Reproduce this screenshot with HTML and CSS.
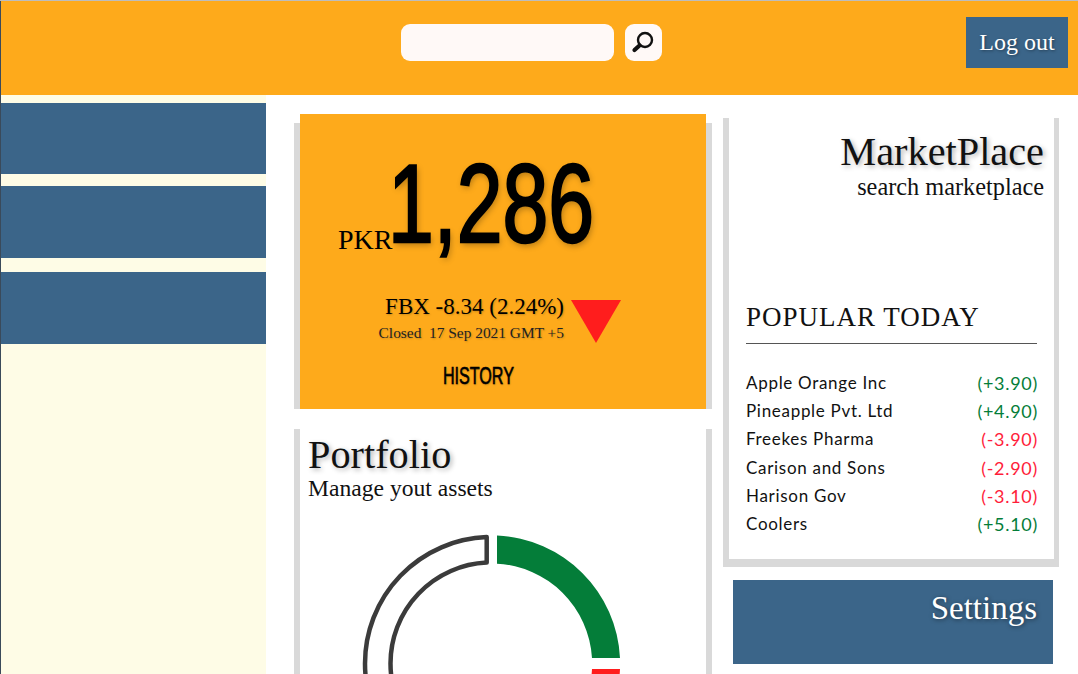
FILE: index.html
```html
<!DOCTYPE html>
<html lang="en">
<head>
<meta charset="UTF-8">
<meta name="viewport" content="width=device-width, initial-scale=1.0">
<title>Dashboard</title>
<link rel="stylesheet" href="styles.css">
</head>
<body>

<div class="page">

<header class="topbar">
  <div class="search">
    <input type="text" class="search-input">
    <button class="search-btn" type="button">
      <svg width="26" height="26" viewBox="0 0 26 26">
        <circle cx="15" cy="10" r="7" fill="none" stroke="#111" stroke-width="2.400"/>
        <path d="M9.500 15.500 L4.500 20" stroke="#111" stroke-width="4.200" stroke-linecap="round"/>
      </svg>
    </button>
  </div>
  <a class="logout">Log out</a>
</header>

<div class="layout">

  <aside class="sidebar">
    <div class="side-item"></div>
    <div class="side-item"></div>
    <div class="side-item"></div>
  </aside>

  <main class="middle">
    <section class="card price-card">
      <div class="price-panel">
        <div class="price-row">
          <span class="currency">PKR</span><span class="price">1,286</span>
        </div>
        <div class="change-row">
          <div class="change-text">
            <div class="change">FBX -8.34 (2.24%)</div>
            <div class="closed">Closed&nbsp; 17 Sep 2021 GMT +5</div>
          </div>
          <div class="arrow-down"></div>
        </div>
        <div class="history">HISTORY</div>
      </div>
    </section>

    <section class="card portfolio-card">
      <h2 class="card-title">Portfolio</h2>
      <p class="card-sub">Manage yout assets</p>
      <svg class="donut" width="270" height="270" viewBox="0 0 270 270">
        <path d="M126.700 7.100 A126.500 126.500 0 0 0 5 133.500 A126.500 126.500 0 0 0 131.500 260 L131.500 234.500 A101 101 0 0 1 30.500 133.500 A101 101 0 0 1 126.700 32.600 Z" fill="none" stroke="#3b3b3b" stroke-width="4.500" stroke-linejoin="round"/>
        <path d="M137 5.600 A128.500 128.500 0 0 1 260 128 L232 128 A100.500 100.500 0 0 0 137 33.650 Z" fill="#047d39"/>
        <path d="M232 139 L260 139 A128.500 128.500 0 0 1 247 190 L215 190 A100.500 100.500 0 0 0 232 139 Z" fill="#ff1d1d"/>
      </svg>
    </section>
  </main>

  <div class="right">
    <section class="market-card">
      <h2 class="card-title">MarketPlace</h2>
      <p class="card-sub">search marketplace</p>
      <h3 class="popular-title">POPULAR TODAY</h3>
      <ul class="popular-list">
        <li><span>Apple Orange Inc</span><span class="up">(+3.90)</span></li>
        <li><span>Pineapple Pvt. Ltd</span><span class="up">(+4.90)</span></li>
        <li><span>Freekes Pharma</span><span class="down">(-3.90)</span></li>
        <li><span>Carison and Sons</span><span class="down">(-2.90)</span></li>
        <li><span>Harison Gov</span><span class="down">(-3.10)</span></li>
        <li><span>Coolers</span><span class="up">(+5.10)</span></li>
      </ul>
    </section>

    <section class="settings-card">
      <h2 class="settings-title">Settings</h2>
    </section>
  </div>

</div>

</div>

</body>
</html>
```

FILE: styles.css
```css
html, body {
  margin: 0;
  padding: 0;
  background: #fff;
}
.page {
  height: 674px;
  overflow: hidden;
  border-top: 1px solid #bdbdbd;
  box-sizing: border-box;
  font-family: "Liberation Serif", serif;
}

/* top bar */
.topbar {
  background-color: #feaa1b;
  height: 94px;
  border-left: 1px solid #3a4a5a;
  position: relative;
  display: flex;
  justify-content: center;
}
.search {
  display: flex;
  gap: 11px;
  margin-top: 23px;
  margin-left: -17px;
}
.search-input {
  width: 213px;
  height: 37px;
  box-sizing: border-box;
  border: none;
  border-radius: 9px;
  background: #fff9f7;
}
.search-btn {
  width: 37px;
  height: 37px;
  padding: 0;
  border: none;
  border-radius: 9px;
  background: #fff9f7;
  display: flex;
  align-items: center;
  justify-content: center;
}
.logout {
  position: absolute;
  top: 16px;
  right: 10px;
  width: 102px;
  height: 51px;
  background-color: #3b6589;
  color: #fff;
  font-size: 24px;
  line-height: 50px;
  text-align: center;
  text-shadow: 1px 1px 3px rgba(0,0,0,0.4);
}

.layout {
  display: flex;
  border-left: 1px solid #3a4a5a;
}

/* sidebar */
.sidebar {
  width: 265px;
  height: 580px;
  background-color: #fefce6;
  padding-top: 8px;
  box-sizing: border-box;
  flex-shrink: 0;
}
.side-item {
  height: 71px;
  background-color: #3b6589;
  margin-bottom: 12px;
}
.side-item:nth-child(2) {
  height: 72px;
  margin-bottom: 14px;
}
.side-item:nth-child(3) {
  height: 72px;
}

/* middle column */
.middle {
  width: 418px;
  margin-left: 28px;
  flex-shrink: 0;
}
.card {
  border-left: 6px solid #d9d9d9;
  border-right: 6px solid #d9d9d9;
}
.price-card {
  margin-top: 28px;
  height: 286px;
}
.price-panel {
  background-color: #feaa1b;
  height: 295px;
  position: relative;
  top: -9px;
  box-sizing: border-box;
  padding-left: 38px;
}
.price-row {
  height: 156px;
  padding-top: 12px;
  box-sizing: border-box;
  white-space: nowrap;
  line-height: 156px;
}
.currency {
  font-size: 28px;
  vertical-align: -7px;
}
.price {
  display: inline-block;
  width: 205px;
  margin-left: -4px;
  font-family: "Liberation Sans", sans-serif;
  font-size: 112px;
  color: #000;
  -webkit-text-stroke: 2.500px #000;
  text-shadow: 2px 3px 8px rgba(0,0,0,0.3);
  transform: scaleX(0.735);
  transform-origin: left center;
}
.change-row {
  display: flex;
  justify-content: flex-end;
  width: 283px;
  margin-top: 22px;
  gap: 7px;
}
.change-text {
  text-align: right;
  text-shadow: 1px 1px 2px rgba(0,0,0,0.2);
}
.change {
  font-size: 23px;
  line-height: 30px;
}
.closed {
  font-size: 15.400px;
  line-height: 22px;
  color: #222;
}
.arrow-down {
  width: 0;
  height: 0;
  margin-top: 8px;
  border-left: 25px solid transparent;
  border-right: 25px solid transparent;
  border-top: 43px solid #ff1d1d;
}
.history {
  display: inline-block;
  font-family: "Liberation Sans", sans-serif;
  font-size: 24px;
  line-height: 30px;
  margin-top: 17px;
  margin-left: 105px;
  -webkit-text-stroke: 0.600px #000;
  text-shadow: 1px 1px 2px rgba(0,0,0,0.25);
  transform: scaleX(0.67);
  transform-origin: left center;
}

.portfolio-card {
  margin-top: 20px;
  height: 300px;
  padding-left: 8px;
}
.card-title {
  margin: 0;
  padding-top: 4px;
  font-size: 40.300px;
  font-weight: normal;
  line-height: 44px;
  color: #111;
  text-shadow: 2px 2px 5px rgba(0,0,0,0.3);
}
.card-sub {
  margin: 0;
  font-size: 23.600px;
  line-height: 22px;
  color: #111;
}
.donut {
  display: block;
  margin-top: 31px;
  margin-left: 52px;
}

/* right column */
.right {
  width: 336px;
  margin-left: 11px;
  flex-shrink: 0;
}
.market-card {
  margin-top: 23px;
  height: 449px;
  box-sizing: border-box;
  border-left: 6px solid #d9d9d9;
  border-right: 5px solid #d9d9d9;
  border-bottom: 8px solid #d9d9d9;
  padding: 8px 10px 0 17px;
  text-align: right;
}
.market-card .card-sub {
  margin-top: 2px;
  font-size: 24.300px;
}
.popular-title {
  margin: 102px 0 0;
  padding-bottom: 9px;
  width: 291px;
  border-bottom: 1px solid #555;
  font-size: 27px;
  font-weight: normal;
  line-height: 34px;
  letter-spacing: 1px;
  text-align: left;
  color: #111;
}
.popular-list {
  list-style-type: none;
  margin: 25px 0 0;
  padding: 0;
  width: 292px;
  font-family: "Lato", sans-serif;
  font-size: 17px;
  letter-spacing: 0.700px;
  text-align: left;
  color: #111;
}
.popular-list li {
  display: flex;
  justify-content: space-between;
  height: 28.200px;
  line-height: 28px;
}
.up, .down {
  font-size: 18px;
}
.up {
  color: #047d39;
}
.down {
  color: #ff1d3a;
}

.settings-card {
  margin-top: 13px;
  margin-left: 10px;
  width: 320px;
  height: 84px;
  box-sizing: border-box;
  background-color: #3b6589;
  padding: 8px 16px 0 0;
  text-align: right;
}
.settings-title {
  margin: 0;
  font-size: 33px;
  font-weight: normal;
  line-height: 40px;
  color: #fff;
  text-shadow: 1px 1px 4px rgba(0,0,0,0.5);
}
```
